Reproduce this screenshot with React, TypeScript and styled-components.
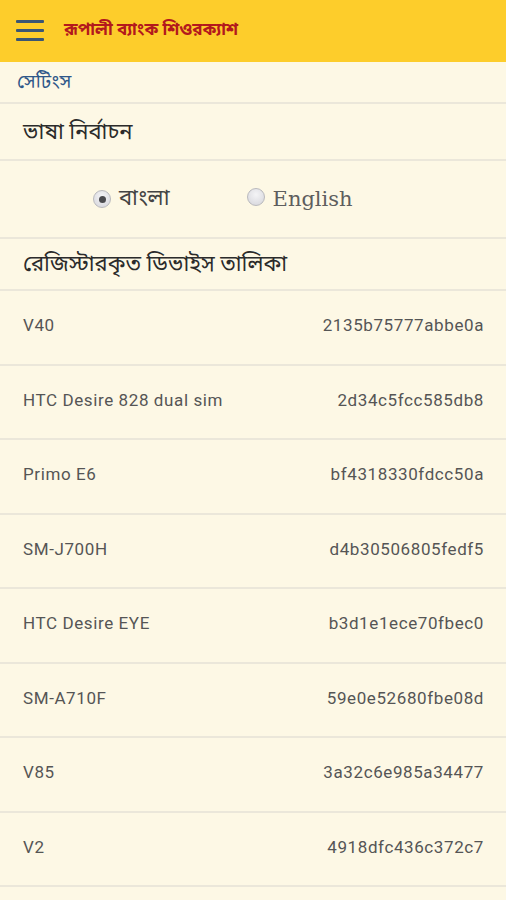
import styled, { createGlobalStyle } from "styled-components";

const GlobalStyle = createGlobalStyle`
  html, body {
    margin: 0;
    padding: 0;
    background: #fdf8e5;
  }
  * {
    box-sizing: border-box;
  }
`;

const Page = styled.div`
  width: 506px;
  min-height: 900px;
  background: #fdf8e5;
  font-family: Roboto, "Noto Sans", "Noto Sans Bengali", sans-serif;
`;

const TopBar = styled.div`
  height: 62px;
  background: #fdcd2b;
  display: flex;
  align-items: center;
  padding: 0 16px;
  gap: 20px;
`;

const MenuIcon = styled.div`
  width: 28px;
  display: flex;
  flex-direction: column;
  gap: 6px;
  margin-top: -1px;

  span {
    display: block;
    height: 3px;
    background: #3b5673;
    border-radius: 1px;
  }
`;

const AppTitle = styled.div`
  color: #b3191d;
  font-size: 17px;
  font-weight: bold;
  margin-top: -2px;
`;

const Crumb = styled.div`
  height: 42px;
  display: flex;
  align-items: center;
  padding: 2px 17px 0;
  color: #2f5789;
  font-size: 19px;
  border-bottom: 2px solid #ebe7da;
`;

const SectionHead = styled.div<{ $h: number }>`
  height: ${(p) => p.$h}px;
  display: flex;
  align-items: center;
  padding: 3px 23px 0;
  color: #2b2b2b;
  font-size: 22px;
  border-bottom: 2px solid #ebe7da;
`;

const RadioRow = styled.div`
  height: 78px;
  display: flex;
  align-items: center;
  padding-left: 93px;
  gap: 77px;
  border-bottom: 2px solid #ebe7da;
`;

const RadioOption = styled.label`
  display: flex;
  align-items: center;
  gap: 8px;
  color: #444;
`;

const RadioDot = styled.span<{ $on?: boolean }>`
  width: 18px;
  height: 18px;
  border-radius: 50%;
  background: radial-gradient(circle at 50% 35%, #f4f4f6, #d4d4da);
  border: 1px solid #b9b9bd;
  display: flex;
  align-items: center;
  justify-content: center;
  margin-top: ${(p) => (p.$on ? "0" : "-4px")};

  &::after {
    content: "";
    width: 7px;
    height: 7px;
    border-radius: 50%;
    background: #4a4a4e;
    display: ${(p) => (p.$on ? "block" : "none")};
  }
`;

const BanglaLabel = styled.span`
  font-size: 22px;
`;

const EnglishLabel = styled.span`
  font-family: "DejaVu Serif", "Liberation Serif", serif;
  font-size: 21px;
  color: #5e5e5e;
`;

const DeviceRow = styled.div`
  height: 74.5px;
  display: flex;
  align-items: center;
  justify-content: space-between;
  padding: 0 22px 4px 23px;
  color: #555;
  font-size: 17px;
  letter-spacing: 0.6px;
  border-bottom: 2px solid #ebe7da;
`;

const devices = [
  ["V40", "2135b75777abbe0a"],
  ["HTC Desire 828 dual sim", "2d34c5fcc585db8"],
  ["Primo E6", "bf4318330fdcc50a"],
  ["SM-J700H", "d4b30506805fedf5"],
  ["HTC Desire EYE", "b3d1e1ece70fbec0"],
  ["SM-A710F", "59e0e52680fbe08d"],
  ["V85", "3a32c6e985a34477"],
  ["V2", "4918dfc436c372c7"],
];

export default function App() {
  return (
    <>
      <GlobalStyle />
      <Page>
        <TopBar>
          <MenuIcon>
            <span />
            <span />
            <span />
          </MenuIcon>
          <AppTitle>রূপালী ব্যাংক শিওরক্যাশ</AppTitle>
        </TopBar>
        <Crumb>সেটিংস</Crumb>
        <SectionHead $h={57}>ভাষা নির্বাচন</SectionHead>
        <RadioRow>
          <RadioOption>
            <RadioDot $on />
            <BanglaLabel>বাংলা</BanglaLabel>
          </RadioOption>
          <RadioOption>
            <RadioDot />
            <EnglishLabel>English</EnglishLabel>
          </RadioOption>
        </RadioRow>
        <SectionHead $h={52}>রেজিস্টারকৃত ডিভাইস তালিকা</SectionHead>
        {devices.map(([name, id]) => (
          <DeviceRow key={id}>
            <span>{name}</span>
            <span>{id}</span>
          </DeviceRow>
        ))}
      </Page>
    </>
  );
}
